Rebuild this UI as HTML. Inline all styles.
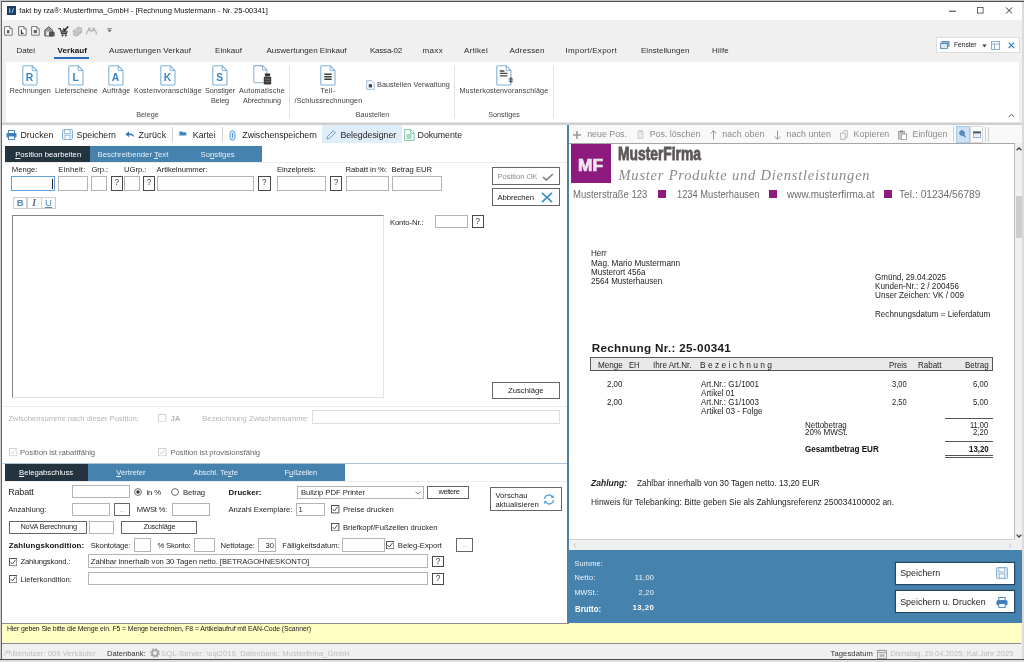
<!DOCTYPE html>
<html><head><meta charset="utf-8">
<style>
*{box-sizing:border-box;margin:0;padding:0}
html,body{width:1024px;height:662px;overflow:hidden;background:#f0f0f0}
body{filter:blur(0.4px);font-family:"Liberation Sans",sans-serif;font-size:7.7px;color:#262626;position:relative}
.a{position:absolute;white-space:nowrap}
.in{position:absolute;background:#fff;border:1.2px solid #b4b4b4}
.q{position:absolute;background:#fff;border:1.2px solid #4a4a4a;font-size:8.2px;text-align:center;color:#3a3a3a}
u{text-decoration-thickness:0.6px;text-underline-offset:1px}
</style></head><body>
<div class="a" style="left:0.00px;top:0.00px;width:1024.00px;height:20.20px;background:#fff"></div>
<svg class="a" style="left:7.00px;top:6.30px" width="9" height="9" viewBox="0 0 9 9"><rect width="9" height="9" fill="#1d3b63"/><path d="M2 7V2.2h1.3V7zM4.2 7l2-5h1.2l-2 5z" fill="#7fb2dd"/></svg>
<div class="a" style="left:19.30px;top:6.00px;line-height:10px;font-size:7.5px;color:#111">fakt by rza®: Musterfirma_GmbH - [Rechnung Mustermann - Nr. 25-00341]</div>
<svg class="a" style="left:946.00px;top:5.00px" width="70" height="12" viewBox="0 0 70 12"><path d="M3 6.2h7" stroke="#333" stroke-width="1"/><rect x="31.5" y="2.5" width="5.6" height="5.6" fill="none" stroke="#444" stroke-width="0.8"/><path d="M60 2.5l6 6M66 2.5l-6 6" stroke="#333" stroke-width="1"/></svg>
<svg class="a" style="left:4.00px;top:26.20px" width="9" height="10" viewBox="0 0 9 10"><path d="M0.6 0.6h5.2l2.4 2.4v6.2H0.6z" fill="#fbfbfb" stroke="#777" stroke-width="1"/><path d="M5.8 0.6v2.4h2.4" fill="none" stroke="#777" stroke-width="0.8"/><rect x="3" y="4.2" width="2.4" height="3" fill="#555"/></svg>
<svg class="a" style="left:17.60px;top:26.20px" width="9" height="10" viewBox="0 0 9 10"><path d="M0.6 0.6h5.2l2.4 2.4v6.2H0.6z" fill="#fbfbfb" stroke="#777" stroke-width="1"/><path d="M5.8 0.6v2.4h2.4" fill="none" stroke="#777" stroke-width="0.8"/><path d="M3.4 3.8v3.6h2.2" fill="none" stroke="#333" stroke-width="1.1"/></svg>
<svg class="a" style="left:31.00px;top:26.20px" width="9" height="10" viewBox="0 0 9 10"><path d="M0.6 0.6h5.2l2.4 2.4v6.2H0.6z" fill="#fbfbfb" stroke="#777" stroke-width="1"/><path d="M5.8 0.6v2.4h2.4" fill="none" stroke="#777" stroke-width="0.8"/><rect x="2.6" y="4" width="3.4" height="3.2" fill="#666"/></svg>
<svg class="a" style="left:44.30px;top:25.60px" width="11" height="11" viewBox="0 0 11 11"><path d="M0.8 10V4.2L4.6 0.8l4 3.4V10z" fill="#9a9a9a" stroke="#555" stroke-width="1"/><path d="M2.3 9.5V5.5h2.6v4z" fill="#eee"/><path d="M5.6 10V6.2h4.6V10z" fill="#555" stroke="#444" stroke-width="0.7"/></svg>
<svg class="a" style="left:58.30px;top:25.60px" width="11" height="11" viewBox="0 0 11 11"><path d="M0.4 2.6h1.8l1.5 5h4.6l1-2.8" fill="none" stroke="#333" stroke-width="1.1"/><path d="M3 4.2h5.2v2.6H3.8z" fill="#555"/><circle cx="4.5" cy="9.4" r="1" fill="#333"/><circle cx="7.8" cy="9.4" r="1" fill="#333"/><path d="M5.2 2.6l1.6 1.6L10.2 0.6" fill="none" stroke="#222" stroke-width="1.5"/></svg>
<svg class="a" style="left:71.80px;top:25.60px" width="11" height="11" viewBox="0 0 11 11"><path d="M0.8 5.2L6.6 1l3.6 1.6L4.4 7z" fill="#c9c9c9" stroke="#b0b0b0" stroke-width="0.8"/><path d="M0.8 6.8L4.4 8.6l5.8-4.4M0.8 8.4l3.6 1.8 5.8-4.4" fill="none" stroke="#b5b5b5" stroke-width="1.1"/></svg>
<svg class="a" style="left:85.80px;top:27.00px" width="11" height="8" viewBox="0 0 11 8"><path d="M0.5 7.5c0-3 1.3-4.2 2.8-4.2s2.2 1.2 2.2 1.2 0.7-1.2 2.2-1.2 2.8 1.2 2.8 4.2" fill="none" stroke="#b5b5b5" stroke-width="1.3"/><circle cx="3.4" cy="1.9" r="1.4" fill="#b5b5b5"/><circle cx="7.6" cy="1.9" r="1.4" fill="#b5b5b5"/></svg>
<svg class="a" style="left:106.80px;top:28.00px" width="5" height="5" viewBox="0 0 5 5"><path d="M0.3 0.6h4.4" stroke="#666" stroke-width="0.8"/><path d="M0.5 1.8h4L2.5 4.4z" fill="#666"/></svg>
<div class="a" style="left:16.50px;top:45.10px;line-height:11px;font-size:8.0px;letter-spacing:-0.035px;color:#2b2b2b">Datei</div>
<div class="a" style="left:57.40px;top:45.10px;line-height:11px;font-size:8.0px;letter-spacing:0.099px;color:#111;font-weight:bold">Verkauf</div>
<div class="a" style="left:109.00px;top:45.10px;line-height:11px;font-size:8.0px;letter-spacing:0.075px;color:#2b2b2b">Auswertungen Verkauf</div>
<div class="a" style="left:215.00px;top:45.10px;line-height:11px;font-size:8.0px;letter-spacing:0.045px;color:#2b2b2b">Einkauf</div>
<div class="a" style="left:266.50px;top:45.10px;line-height:11px;font-size:8.0px;color:#2b2b2b">Auswertungen Einkauf</div>
<div class="a" style="left:370.00px;top:45.10px;line-height:11px;font-size:8.0px;letter-spacing:-0.225px;color:#2b2b2b">Kassa-02</div>
<div class="a" style="left:422.50px;top:45.10px;line-height:11px;font-size:8.0px;letter-spacing:0.347px;color:#2b2b2b">maxx</div>
<div class="a" style="left:464.00px;top:45.10px;line-height:11px;font-size:8.0px;letter-spacing:0.253px;color:#2b2b2b">Artikel</div>
<div class="a" style="left:509.50px;top:45.10px;line-height:11px;font-size:8.0px;letter-spacing:0.150px;color:#2b2b2b">Adressen</div>
<div class="a" style="left:565.50px;top:45.10px;line-height:11px;font-size:8.0px;letter-spacing:0.268px;color:#2b2b2b">Import/Export</div>
<div class="a" style="left:641.00px;top:45.10px;line-height:11px;font-size:8.0px;letter-spacing:0.036px;color:#2b2b2b">Einstellungen</div>
<div class="a" style="left:712.00px;top:45.10px;line-height:11px;font-size:8.0px;letter-spacing:0.199px;color:#2b2b2b">Hilfe</div>
<div class="a" style="left:54.20px;top:56.50px;width:34.60px;height:2.10px;background:#2a6cb8"></div>
<div class="a" style="left:935.50px;top:37.40px;width:84.20px;height:15.30px;background:#fff;border:1px solid #dcdcdc"></div>
<svg class="a" style="left:940.00px;top:41.00px" width="10" height="8" viewBox="0 0 10 8"><rect x="2" y="0.5" width="7" height="5" fill="#8fb4d6" stroke="#4a7fb0" stroke-width="0.8"/><rect x="0.5" y="2.5" width="7" height="5" fill="#dbe8f4" stroke="#4a7fb0" stroke-width="0.8"/></svg>
<div class="a" style="left:954.00px;top:40.20px;line-height:10px;font-size:6.8px;letter-spacing:-0.079px;color:#222">Fenster</div>
<svg class="a" style="left:982.00px;top:43.50px" width="5" height="4" viewBox="0 0 5 4"><path d="M0.3 0.5h4.4L2.5 3.5z" fill="#444"/></svg>
<svg class="a" style="left:991.00px;top:40.50px" width="9" height="9" viewBox="0 0 9 9"><rect x="0.5" y="0.5" width="8" height="8" fill="#fff" stroke="#6fa0cc" stroke-width="0.8"/><path d="M0.5 3h8M3.5 3v5.5" stroke="#6fa0cc" stroke-width="0.8"/></svg>
<svg class="a" style="left:1008.00px;top:42.00px" width="7" height="7" viewBox="0 0 7 7"><path d="M0.7 0.7l5.3 5.3M6 0.7L0.7 6" stroke="#2f7fc4" stroke-width="1.1"/></svg>
<div class="a" style="left:6.00px;top:61.50px;width:1013.00px;height:60.00px;background:#fff"></div>
<div class="a" style="left:2.00px;top:121.50px;width:1020.00px;height:3.00px;background:#cfcfcf"></div>
<div class="a" style="left:2.00px;top:121.50px;width:1020.00px;height:1.00px;background:#e6e6e6"></div>
<svg class="a" style="left:21.80px;top:64.80px" width="17" height="21" viewBox="0 0 17 21"><path d="M2 0.8h8.2l4.8 4.8v13.2a1.2 1.2 0 0 1-1.2 1.2H2a1.2 1.2 0 0 1-1.2-1.2V2A1.2 1.2 0 0 1 2 0.8z" fill="#fff" stroke="#7fb3da" stroke-width="1.1"/><path d="M10.2 0.8v4.8H15" fill="none" stroke="#7fb3da" stroke-width="1"/><text x="7.6" y="16" text-anchor="middle" font-family="Liberation Sans" font-weight="bold" font-size="10.4" fill="#3b86c0">R</text></svg>
<svg class="a" style="left:68.00px;top:64.80px" width="17" height="21" viewBox="0 0 17 21"><path d="M2 0.8h8.2l4.8 4.8v13.2a1.2 1.2 0 0 1-1.2 1.2H2a1.2 1.2 0 0 1-1.2-1.2V2A1.2 1.2 0 0 1 2 0.8z" fill="#fff" stroke="#7fb3da" stroke-width="1.1"/><path d="M10.2 0.8v4.8H15" fill="none" stroke="#7fb3da" stroke-width="1"/><text x="7.6" y="16" text-anchor="middle" font-family="Liberation Sans" font-weight="bold" font-size="10.4" fill="#3b86c0">L</text></svg>
<svg class="a" style="left:108.10px;top:64.80px" width="17" height="21" viewBox="0 0 17 21"><path d="M2 0.8h8.2l4.8 4.8v13.2a1.2 1.2 0 0 1-1.2 1.2H2a1.2 1.2 0 0 1-1.2-1.2V2A1.2 1.2 0 0 1 2 0.8z" fill="#fff" stroke="#7fb3da" stroke-width="1.1"/><path d="M10.2 0.8v4.8H15" fill="none" stroke="#7fb3da" stroke-width="1"/><text x="7.6" y="16" text-anchor="middle" font-family="Liberation Sans" font-weight="bold" font-size="10.4" fill="#3b86c0">A</text></svg>
<svg class="a" style="left:159.50px;top:64.80px" width="17" height="21" viewBox="0 0 17 21"><path d="M2 0.8h8.2l4.8 4.8v13.2a1.2 1.2 0 0 1-1.2 1.2H2a1.2 1.2 0 0 1-1.2-1.2V2A1.2 1.2 0 0 1 2 0.8z" fill="#fff" stroke="#7fb3da" stroke-width="1.1"/><path d="M10.2 0.8v4.8H15" fill="none" stroke="#7fb3da" stroke-width="1"/><text x="7.6" y="16" text-anchor="middle" font-family="Liberation Sans" font-weight="bold" font-size="10.4" fill="#3b86c0">K</text></svg>
<svg class="a" style="left:211.50px;top:64.80px" width="17" height="21" viewBox="0 0 17 21"><path d="M2 0.8h8.2l4.8 4.8v13.2a1.2 1.2 0 0 1-1.2 1.2H2a1.2 1.2 0 0 1-1.2-1.2V2A1.2 1.2 0 0 1 2 0.8z" fill="#fff" stroke="#7fb3da" stroke-width="1.1"/><path d="M10.2 0.8v4.8H15" fill="none" stroke="#7fb3da" stroke-width="1"/><text x="7.6" y="16" text-anchor="middle" font-family="Liberation Sans" font-weight="bold" font-size="10.4" fill="#3b86c0">S</text></svg>
<svg class="a" style="left:253.00px;top:64.80px" width="19" height="21" viewBox="0 0 19 21"><path d="M2 0.6h7.5l4.5 4.5v11.5a1.2 1.2 0 0 1-1.2 1.2H2a1.2 1.2 0 0 1-1.2-1.2V1.8A1.2 1.2 0 0 1 2 0.6z" fill="#fff" stroke="#8fb3d2" stroke-width="1.1"/><path d="M9.5 0.6v4.5H14" fill="none" stroke="#8fb3d2" stroke-width="1"/><rect x="10.8" y="11.4" width="7.4" height="8" rx="1.2" fill="#3a3a3a"/><path d="M11.6 8.6h5.8l-0.6 2.4h-4.6z" fill="#333"/><path d="M11.8 14.2h5.4M11.8 16.6h5.4" stroke="#8a8a8a" stroke-width="0.7"/></svg>
<svg class="a" style="left:319.50px;top:64.80px" width="17" height="21" viewBox="0 0 17 21"><path d="M2 0.8h8.2l4.8 4.8v13.2a1.2 1.2 0 0 1-1.2 1.2H2a1.2 1.2 0 0 1-1.2-1.2V2A1.2 1.2 0 0 1 2 0.8z" fill="#fff" stroke="#7fb3da" stroke-width="1.1"/><path d="M10.2 0.8v4.8H15" fill="none" stroke="#7fb3da" stroke-width="1"/><path d="M4.3 9.3h7.4M4.3 11.8h7.4M4.3 14.3h7.4" stroke="#3a3a3a" stroke-width="1.5"/></svg>
<svg class="a" style="left:495.50px;top:64.80px" width="19" height="21" viewBox="0 0 19 21"><path d="M2 0.8h8.2l4.8 4.8v13.2a1.2 1.2 0 0 1-1.2 1.2H2a1.2 1.2 0 0 1-1.2-1.2V2A1.2 1.2 0 0 1 2 0.8z" fill="#fff" stroke="#7fb3da" stroke-width="1.1"/><path d="M10.2 0.8v4.8H15" fill="none" stroke="#7fb3da" stroke-width="1"/><path d="M3.8 6h4.6M3.8 8.4h7.6M3.8 10.8h7.6" stroke="#444" stroke-width="1.3"/><path d="M12.6 14h4.4M12.6 16.2h4.4M14.8 12v6" stroke="#3a4a5a" stroke-width="1"/></svg>
<div class="a" style="left:9.70px;top:85.60px;line-height:10px;font-size:7.2px;letter-spacing:0.046px;color:#3c3c3c">Rechnungen</div>
<div class="a" style="left:55.00px;top:85.60px;line-height:10px;font-size:7.2px;color:#3c3c3c">Lieferscheine</div>
<div class="a" style="left:102.20px;top:85.60px;line-height:10px;font-size:7.2px;letter-spacing:0.135px;color:#3c3c3c">Aufträge</div>
<div class="a" style="left:134.00px;top:85.60px;line-height:10px;font-size:7.2px;letter-spacing:0.153px;color:#3c3c3c">Kostenvoranschläge</div>
<div class="a" style="left:205.00px;top:85.60px;line-height:10px;font-size:7.2px;letter-spacing:-0.046px;color:#3c3c3c">Sonstiger</div>
<div class="a" style="left:211.00px;top:96.00px;line-height:10px;font-size:7.2px;letter-spacing:-0.083px;color:#3c3c3c">Beleg</div>
<div class="a" style="left:239.00px;top:85.60px;line-height:10px;font-size:7.2px;letter-spacing:0.198px;color:#3c3c3c">Automatische</div>
<div class="a" style="left:243.00px;top:96.00px;line-height:10px;font-size:7.2px;letter-spacing:-0.083px;color:#3c3c3c">Abrechnung</div>
<div class="a" style="left:320.50px;top:85.60px;line-height:10px;font-size:7.2px;letter-spacing:0.360px;color:#3c3c3c">Teil-</div>
<div class="a" style="left:294.50px;top:96.00px;line-height:10px;font-size:7.2px;letter-spacing:0.153px;color:#3c3c3c">/Schlussrechnungen</div>
<div class="a" style="left:459.50px;top:85.60px;line-height:10px;font-size:7.2px;letter-spacing:0.123px;color:#3c3c3c">Musterkostenvoranschläge</div>
<svg class="a" style="left:366.00px;top:79.60px" width="9" height="10" viewBox="0 0 9 10"><path d="M0.6 0.6h5.2l2.6 2.6v6.2H0.6z" fill="#f4f8fc" stroke="#9bbfdc" stroke-width="0.9"/><rect x="2.8" y="4.2" width="3.2" height="3.2" fill="#444"/></svg>
<div class="a" style="left:377.00px;top:79.60px;line-height:10px;font-size:7.2px;letter-spacing:0.083px;color:#3c3c3c">Baustellen Verwaltung</div>
<div class="a" style="left:136.29px;top:109.70px;line-height:10px;font-size:7.2px;color:#444">Belege</div>
<div class="a" style="left:355.69px;top:109.70px;line-height:10px;font-size:7.2px;color:#444">Baustellen</div>
<div class="a" style="left:488.19px;top:109.70px;line-height:10px;font-size:7.2px;color:#444">Sonstiges</div>
<div class="a" style="left:289.30px;top:66.00px;width:1.00px;height:52.00px;background:#e2e2e2"></div>
<div class="a" style="left:454.00px;top:66.00px;width:1.00px;height:52.00px;background:#e2e2e2"></div>
<div class="a" style="left:553.00px;top:66.00px;width:1.00px;height:52.00px;background:#e2e2e2"></div>
<svg class="a" style="left:1007.50px;top:112.50px" width="7" height="5" viewBox="0 0 7 5"><path d="M0.8 4l2.7-2.7L6.2 4" fill="none" stroke="#555" stroke-width="1"/></svg>
<div class="a" style="left:2.00px;top:124.50px;width:565.50px;height:498.30px;background:#fff"></div>
<div class="a" style="left:322.00px;top:124.60px;width:79.80px;height:18.80px;background:#e0eefa"></div>
<svg class="a" style="left:6.00px;top:129.50px" width="11" height="10" viewBox="0 0 11 10"><rect x="2.5" y="0.5" width="6" height="3" fill="#fff" stroke="#3d7fb8" stroke-width="0.9"/><rect x="0.5" y="3" width="10" height="4.5" rx="1" fill="#3d7fb8"/><rect x="2.5" y="6" width="6" height="3.5" fill="#fff" stroke="#3d7fb8" stroke-width="0.9"/></svg>
<div class="a" style="left:20.40px;top:128.60px;line-height:12px;font-size:8.8px;letter-spacing:0.047px;color:#1e1e1e">Drucken</div>
<svg class="a" style="left:62.00px;top:129.30px" width="11" height="11" viewBox="0 0 11 11"><rect x="0.5" y="0.5" width="10" height="10" rx="1" fill="#e6f0f8" stroke="#7fabd0" stroke-width="0.9"/><rect x="2.5" y="0.8" width="5.5" height="3.6" fill="#fff" stroke="#7fabd0" stroke-width="0.7"/><rect x="3" y="6.3" width="5" height="4" fill="#fff" stroke="#7fabd0" stroke-width="0.7"/></svg>
<div class="a" style="left:76.60px;top:128.60px;line-height:12px;font-size:8.8px;letter-spacing:-0.025px;color:#1e1e1e">Speichern</div>
<svg class="a" style="left:124.50px;top:131.00px" width="10" height="7" viewBox="0 0 10 7"><path d="M0.3 3.2L4 0.3v1.9c3 0 5 1.3 5.6 4.2C8 4.7 6.5 4.3 4 4.3v1.9z" fill="#3d7fb8"/></svg>
<div class="a" style="left:138.40px;top:128.60px;line-height:12px;font-size:8.8px;letter-spacing:0.151px;color:#1e1e1e">Zurück</div>
<div class="a" style="left:172.00px;top:127.00px;width:1.00px;height:15.00px;background:#d0d0d0"></div>
<svg class="a" style="left:179.00px;top:131.40px" width="8" height="5" viewBox="0 0 8 5"><path d="M0.3 0.4h2.6l0.8 0.8h3.6v3.4H0.3z" fill="#3a86c8"/></svg>
<div class="a" style="left:192.80px;top:128.60px;line-height:12px;font-size:8.8px;letter-spacing:-0.015px;color:#1e1e1e">Kartei</div>
<div class="a" style="left:221.50px;top:127.00px;width:1.00px;height:15.00px;background:#d0d0d0"></div>
<svg class="a" style="left:229.00px;top:129.50px" width="7" height="11" viewBox="0 0 7 11"><rect x="1" y="0.8" width="5" height="9.4" rx="2.5" fill="#dcebf7" stroke="#5a9ad0" stroke-width="1"/><path d="M3.5 3v5" stroke="#5a9ad0" stroke-width="1"/></svg>
<div class="a" style="left:242.30px;top:128.60px;line-height:12px;font-size:8.8px;letter-spacing:-0.037px;color:#1e1e1e">Zwischenspeichern</div>
<svg class="a" style="left:326.00px;top:129.50px" width="10" height="10" viewBox="0 0 10 10"><path d="M1 9l0.7-2.6L7.3 0.8l1.9 1.9L3.6 8.3z" fill="#eaf2fa" stroke="#5b8fc0" stroke-width="0.9"/></svg>
<div class="a" style="left:340.40px;top:128.60px;line-height:12px;font-size:8.8px;letter-spacing:-0.036px;color:#1e1e1e">Belegdesigner</div>
<svg class="a" style="left:403.80px;top:128.50px" width="11" height="12" viewBox="0 0 11 12"><path d="M0.6 0.6h6l3.6 3.6v7.2H0.6z" fill="#fff" stroke="#6fc198" stroke-width="0.9"/><rect x="2.5" y="5" width="5" height="5" fill="#a4dabf"/><path d="M6.6 0.6v3.6h3.6" fill="none" stroke="#6fc198" stroke-width="0.8"/></svg>
<div class="a" style="left:417.60px;top:128.60px;line-height:12px;font-size:8.8px;letter-spacing:-0.067px;color:#1e1e1e">Dokumente</div>
<div class="a" style="left:5.00px;top:145.50px;width:256.60px;height:16.10px;background:#4682ae"></div>
<div class="a" style="left:5.00px;top:145.50px;width:84.80px;height:16.10px;background:#24343f"></div>
<div class="a" style="left:15.20px;top:148.50px;line-height:11px;font-size:7.7px;letter-spacing:0.009px;color:#fff"><u>P</u>osition bearbeiten</div>
<div class="a" style="left:97.50px;top:148.50px;line-height:11px;font-size:7.7px;letter-spacing:0.050px;color:#e8f1f8">Beschreibender <u>T</u>ext</div>
<div class="a" style="left:200.60px;top:148.50px;line-height:11px;font-size:7.7px;letter-spacing:0.020px;color:#e8f1f8">So<u>n</u>stiges</div>
<div class="a" style="left:3.00px;top:162.20px;width:564.00px;height:0.80px;background:#ececec"></div>
<div class="a" style="left:11.80px;top:164.10px;line-height:11px;font-size:7.7px;letter-spacing:-0.014px;color:#222">Menge:</div>
<div class="a" style="left:58.30px;top:164.10px;line-height:11px;font-size:7.7px;letter-spacing:0.190px;color:#222">Einheit:</div>
<div class="a" style="left:91.50px;top:164.10px;line-height:11px;font-size:7.7px;letter-spacing:-0.123px;color:#222">Grp.:</div>
<div class="a" style="left:124.00px;top:164.10px;line-height:11px;font-size:7.7px;letter-spacing:-0.029px;color:#222">UGrp.:</div>
<div class="a" style="left:156.60px;top:164.10px;line-height:11px;font-size:7.7px;letter-spacing:-0.062px;color:#222">Artikelnummer:</div>
<div class="a" style="left:277.00px;top:164.10px;line-height:11px;font-size:7.7px;letter-spacing:-0.109px;color:#222">Einzelpreis:</div>
<div class="a" style="left:345.60px;top:164.10px;line-height:11px;font-size:7.7px;letter-spacing:-0.045px;color:#222">Rabatt in %:</div>
<div class="a" style="left:391.50px;top:164.10px;line-height:11px;font-size:7.7px;letter-spacing:-0.058px;color:#222">Betrag EUR</div>
<div class="a" style="left:11.00px;top:176.10px;width:44.00px;height:14.50px;background:#fff;border:1.3px solid #62a0dc"></div>
<div class="a" style="left:52.00px;top:178.50px;width:1.00px;height:10.50px;background:#222"></div>
<div class="in" style="left:58.00px;top:176.10px;width:30.00px;height:14.50px"></div>
<div class="in" style="left:91.00px;top:176.10px;width:16.00px;height:14.50px"></div>
<div class="q" style="left:110.50px;top:176.10px;width:12.50px;height:14.50px;line-height:12.5px">?</div>
<div class="in" style="left:124.00px;top:176.10px;width:15.50px;height:14.50px"></div>
<div class="q" style="left:143.00px;top:176.10px;width:12.30px;height:14.50px;line-height:12.5px">?</div>
<div class="in" style="left:156.60px;top:176.10px;width:97.90px;height:14.50px"></div>
<div class="q" style="left:258.00px;top:176.10px;width:12.70px;height:14.50px;line-height:12.5px">?</div>
<div class="in" style="left:277.00px;top:176.10px;width:49.40px;height:14.50px"></div>
<div class="q" style="left:330.00px;top:176.10px;width:12.20px;height:14.50px;line-height:12.5px">?</div>
<div class="in" style="left:345.60px;top:176.10px;width:43.20px;height:14.50px"></div>
<div class="in" style="left:391.50px;top:176.10px;width:50.30px;height:14.50px"></div>
<div class="a" style="left:13.20px;top:197.00px;width:14.00px;height:12.00px;background:#fdfdfd;border:1px solid #cdcdcd;text-align:center;line-height:10.5px;font-size:9.6px;font-weight:bold;color:#5b8ab3">B</div>
<div class="a" style="left:26.60px;top:197.00px;width:15.00px;height:12.00px;background:#fdfdfd;border:1px solid #cdcdcd;text-align:center;line-height:10.5px;font-size:9.6px;font-style:italic;font-weight:bold;color:#566a80;font-family:'Liberation Serif'">I</div>
<div class="a" style="left:41.00px;top:197.00px;width:14.80px;height:12.00px;background:#fdfdfd;border:1px solid #cdcdcd;text-align:center;line-height:10.5px;font-size:9.6px;color:#4f86b8;text-decoration:underline;text-underline-offset:0.5px">U</div>
<div class="a" style="left:12.30px;top:215.20px;width:371.70px;height:182.40px;background:#fff;border:1px solid #e3e3e3;border-top:1.3px solid #868686;border-left:1.3px solid #868686"></div>
<div class="a" style="left:389.90px;top:216.50px;line-height:11px;font-size:7.7px;letter-spacing:-0.097px">Konto-Nr.:</div>
<div class="in" style="left:435.30px;top:215.20px;width:32.70px;height:13.20px"></div>
<div class="q" style="left:472.00px;top:215.20px;width:11.80px;height:13.20px;line-height:11.2px">?</div>
<div class="a" style="left:492.00px;top:167.40px;width:68.20px;height:17.50px;background:#fff;border:1.2px solid #666"></div>
<div class="a" style="left:497.50px;top:170.90px;line-height:11px;font-size:7.7px;letter-spacing:-0.060px;color:#8c8c8c">Position OK</div>
<svg class="a" style="left:541.50px;top:172.50px" width="12" height="8" viewBox="0 0 12 8"><path d="M1 4l3.2 3L11 1" fill="none" stroke="#7c7c7c" stroke-width="1.6"/></svg>
<div class="a" style="left:492.00px;top:188.40px;width:68.20px;height:17.50px;background:#fff;border:1.2px solid #666"></div>
<div class="a" style="left:497.50px;top:192.10px;line-height:11px;font-size:7.7px;letter-spacing:-0.083px;color:#222">Abbrechen</div>
<svg class="a" style="left:541.00px;top:192.30px" width="12" height="11" viewBox="0 0 12 11"><path d="M1 0.8l10 9.4M11 0.8L1 10.2" fill="none" stroke="#3d8dc8" stroke-width="1.7"/></svg>
<div class="a" style="left:491.50px;top:381.80px;width:68.70px;height:17.10px;background:#fff;border:1.2px solid #666"></div>
<div class="a" style="left:508.00px;top:385.10px;line-height:11px;font-size:7.7px;color:#222">Zuschläge</div>
<div class="a" style="left:3.00px;top:406.00px;width:564.00px;height:1.00px;background:#ececec"></div>
<div class="a" style="left:8.20px;top:412.50px;line-height:11px;font-size:7.7px;letter-spacing:-0.011px;color:#b5b5b5">Zwischensumme nach dieser Position:</div>
<svg class="a" style="left:158.20px;top:413.80px" width="8.4" height="8.4" viewBox="0 0 8.4 8.4"><rect x="0.5" y="0.5" width="7.4" height="7.4" fill="#fff" stroke="#d0d0d0" stroke-width="1"/></svg>
<div class="a" style="left:170.50px;top:412.50px;line-height:11px;font-size:7.7px;color:#b5b5b5;font-weight:bold">JA</div>
<div class="a" style="left:202.20px;top:412.50px;line-height:11px;font-size:7.7px;letter-spacing:0.020px;color:#b5b5b5">Bezeichnung Zwischensumme:</div>
<div class="a" style="left:312.20px;top:410.40px;width:247.60px;height:14.10px;background:#fff;border:1px solid #dedede"></div>
<svg class="a" style="left:8.80px;top:448.10px" width="8.4" height="8.4" viewBox="0 0 8.4 8.4"><rect x="0.5" y="0.5" width="7.4" height="7.4" fill="#fff" stroke="#cfcfcf" stroke-width="1"/><path d="M1.6 4 L3.4 6 L6.6 1.8" fill="none" stroke="#cfcfcf" stroke-width="1"/></svg>
<div class="a" style="left:20.00px;top:446.80px;line-height:11px;font-size:7.7px;letter-spacing:-0.023px;color:#666">Position ist rabattfähig</div>
<svg class="a" style="left:158.20px;top:448.10px" width="8.4" height="8.4" viewBox="0 0 8.4 8.4"><rect x="0.5" y="0.5" width="7.4" height="7.4" fill="#fff" stroke="#cfcfcf" stroke-width="1"/><path d="M1.6 4 L3.4 6 L6.6 1.8" fill="none" stroke="#cfcfcf" stroke-width="1"/></svg>
<div class="a" style="left:170.50px;top:446.80px;line-height:11px;font-size:7.7px;letter-spacing:-0.037px;color:#666">Position ist provisionsfähig</div>
<div class="a" style="left:3.00px;top:462.80px;width:564.00px;height:1.20px;background:#a9c4dc"></div>
<div class="a" style="left:5.00px;top:464.00px;width:339.50px;height:16.60px;background:#4682ae"></div>
<div class="a" style="left:5.00px;top:464.00px;width:83.00px;height:16.60px;background:#24343f"></div>
<div class="a" style="left:19.00px;top:467.30px;line-height:11px;font-size:7.7px;letter-spacing:0.019px;color:#fff"><u>B</u>elegabschluss</div>
<div class="a" style="left:116.30px;top:467.30px;line-height:11px;font-size:7.7px;letter-spacing:-0.026px;color:#e8f1f8"><u>V</u>ertreter</div>
<div class="a" style="left:193.40px;top:467.30px;line-height:11px;font-size:7.7px;letter-spacing:-0.089px;color:#e8f1f8">Abschl. Te<u>x</u>te</div>
<div class="a" style="left:284.40px;top:467.30px;line-height:11px;font-size:7.7px;letter-spacing:-0.112px;color:#e8f1f8">F<u>u</u>ßzeilen</div>
<div class="a" style="left:8.20px;top:485.50px;line-height:13px;font-size:9px;letter-spacing:-0.169px">Rabatt</div>
<div class="in" style="left:71.80px;top:485.20px;width:58.60px;height:13.20px"></div>
<svg class="a" style="left:134.30px;top:488.00px" width="8" height="8" viewBox="0 0 8 8"><circle cx="4" cy="4" r="3.4" fill="#fff" stroke="#6a6a6a" stroke-width="1"/><circle cx="4" cy="4" r="1.8" fill="#3a3a3a"/></svg>
<div class="a" style="left:146.50px;top:486.70px;line-height:11px;font-size:7.7px;letter-spacing:-0.120px">in %</div>
<svg class="a" style="left:171.00px;top:488.00px" width="8" height="8" viewBox="0 0 8 8"><circle cx="4" cy="4" r="3.4" fill="#fff" stroke="#6a6a6a" stroke-width="1"/></svg>
<div class="a" style="left:183.00px;top:486.70px;line-height:11px;font-size:7.7px;letter-spacing:-0.115px">Betrag</div>
<div class="a" style="left:228.50px;top:486.50px;line-height:11px;font-size:7.9px;letter-spacing:0.076px;color:#111;font-weight:bold">Drucker:</div>
<div class="in" style="left:297.00px;top:486.00px;width:126.60px;height:12.80px"></div>
<div class="a" style="left:301.00px;top:486.90px;line-height:11px;font-size:7.7px;letter-spacing:-0.055px">Bullzip PDF Printer</div>
<svg class="a" style="left:414.50px;top:490.50px" width="6" height="4" viewBox="0 0 6 4"><path d="M0.5 0.6l2.5 2.5 2.5-2.5" fill="none" stroke="#555" stroke-width="0.8"/></svg>
<div class="a" style="left:427.00px;top:486.00px;width:42.00px;height:12.50px;background:#fff;border:1.2px solid #666"></div>
<div class="a" style="left:438.50px;top:487.20px;line-height:10px;font-size:7.4px;letter-spacing:-0.408px">weitere</div>
<div class="a" style="left:490.20px;top:487.10px;width:71.80px;height:24.30px;background:#fff;border:1.2px solid #666"></div>
<div class="a" style="left:495.40px;top:490.00px;line-height:11px;font-size:7.7px">Vorschau</div>
<div class="a" style="left:495.40px;top:499.10px;line-height:11px;font-size:7.7px;letter-spacing:0.028px">aktualisieren</div>
<svg class="a" style="left:543.20px;top:493.80px" width="12" height="11" viewBox="0 0 12 11"><path d="M1.4 4.8A4.5 4.5 0 0 1 9.4 2.8" fill="none" stroke="#5aa3d6" stroke-width="1.3"/><path d="M10.6 6.2A4.5 4.5 0 0 1 2.6 8.2" fill="none" stroke="#5aa3d6" stroke-width="1.3"/><path d="M10.9 0.8v3.3H7.6z" fill="#5aa3d6"/><path d="M1.1 10.2V6.9h3.3z" fill="#5aa3d6"/></svg>
<div class="a" style="left:3.00px;top:481.20px;width:564.00px;height:0.80px;background:#ededed"></div>
<div class="a" style="left:8.20px;top:504.10px;line-height:11px;font-size:7.7px;letter-spacing:-0.043px">Anzahlung:</div>
<div class="in" style="left:71.80px;top:503.00px;width:38.10px;height:13.30px"></div>
<div class="a" style="left:113.70px;top:503.00px;width:16.70px;height:13.30px;background:#fff;border:1.2px solid #666;text-align:center;line-height:13px;font-size:6px;color:#777">...</div>
<div class="a" style="left:136.80px;top:504.10px;line-height:11px;font-size:7.7px;letter-spacing:-0.269px">MWSt %:</div>
<div class="in" style="left:172.00px;top:503.00px;width:37.50px;height:13.30px"></div>
<div class="a" style="left:228.50px;top:504.10px;line-height:11px;font-size:7.7px;letter-spacing:-0.043px">Anzahl Exemplare:</div>
<div class="in" style="left:296.00px;top:503.00px;width:28.50px;height:13.30px"></div>
<div class="a" style="left:298.50px;top:504.10px;line-height:11px;font-size:7.7px">1</div>
<svg class="a" style="left:331.30px;top:505.40px" width="8.4" height="8.4" viewBox="0 0 8.4 8.4"><rect x="0.5" y="0.5" width="7.4" height="7.4" fill="#fff" stroke="#555" stroke-width="1"/><path d="M1.6 4 L3.4 6 L6.6 1.8" fill="none" stroke="#555" stroke-width="1"/></svg>
<div class="a" style="left:343.00px;top:504.10px;line-height:11px;font-size:7.7px;letter-spacing:-0.047px">Preise drucken</div>
<div class="a" style="left:8.80px;top:520.70px;width:77.80px;height:13.30px;background:#fff;border:1.2px solid #666"></div>
<div class="a" style="left:20.50px;top:522.20px;line-height:10px;font-size:7.4px;letter-spacing:-0.269px">NoVA Berechnung</div>
<div class="in" style="left:89.40px;top:520.70px;width:24.30px;height:13.30px"></div>
<div class="a" style="left:121.00px;top:520.70px;width:76.00px;height:13.30px;background:#fff;border:1.2px solid #666"></div>
<div class="a" style="left:143.50px;top:522.20px;line-height:10px;font-size:7.4px;letter-spacing:-0.260px">Zuschläge</div>
<svg class="a" style="left:331.30px;top:522.80px" width="8.4" height="8.4" viewBox="0 0 8.4 8.4"><rect x="0.5" y="0.5" width="7.4" height="7.4" fill="#fff" stroke="#555" stroke-width="1"/><path d="M1.6 4 L3.4 6 L6.6 1.8" fill="none" stroke="#555" stroke-width="1"/></svg>
<div class="a" style="left:343.00px;top:521.50px;line-height:11px;font-size:7.7px;letter-spacing:-0.047px">Briefkopf/Fußzeilen drucken</div>
<div class="a" style="left:8.80px;top:539.80px;line-height:11px;font-size:7.9px;letter-spacing:0.129px;color:#111;font-weight:bold">Zahlungskondition:</div>
<div class="a" style="left:90.80px;top:539.80px;line-height:11px;font-size:7.7px;letter-spacing:-0.136px">Skontotage:</div>
<div class="in" style="left:133.90px;top:538.00px;width:17.60px;height:13.60px"></div>
<div class="a" style="left:157.60px;top:539.80px;line-height:11px;font-size:7.7px;letter-spacing:-0.255px">% Skonto:</div>
<div class="in" style="left:194.00px;top:538.00px;width:20.80px;height:13.60px"></div>
<div class="a" style="left:220.60px;top:539.80px;line-height:11px;font-size:7.7px;letter-spacing:-0.123px">Nettotage:</div>
<div class="in" style="left:258.40px;top:538.00px;width:17.60px;height:13.60px"></div>
<div class="a" style="left:265.50px;top:539.80px;line-height:11px;font-size:7.7px;letter-spacing:-0.033px">30</div>
<div class="a" style="left:282.20px;top:539.80px;line-height:11px;font-size:7.7px">Fälligkeitsdatum:</div>
<div class="in" style="left:342.40px;top:538.00px;width:42.20px;height:13.60px"></div>
<svg class="a" style="left:386.00px;top:541.10px" width="8.4" height="8.4" viewBox="0 0 8.4 8.4"><rect x="0.5" y="0.5" width="7.4" height="7.4" fill="#fff" stroke="#555" stroke-width="1"/><path d="M1.6 4 L3.4 6 L6.6 1.8" fill="none" stroke="#555" stroke-width="1"/></svg>
<div class="a" style="left:397.80px;top:539.80px;line-height:11px;font-size:7.7px;letter-spacing:-0.026px">Beleg-Export</div>
<div class="a" style="left:456.40px;top:538.00px;width:17.00px;height:14.00px;background:#fff;border:1.2px solid #666;text-align:center;line-height:13px;font-size:6px;color:#777">...</div>
<svg class="a" style="left:8.80px;top:557.50px" width="8.4" height="8.4" viewBox="0 0 8.4 8.4"><rect x="0.5" y="0.5" width="7.4" height="7.4" fill="#fff" stroke="#555" stroke-width="1"/><path d="M1.6 4 L3.4 6 L6.6 1.8" fill="none" stroke="#555" stroke-width="1"/></svg>
<div class="a" style="left:20.50px;top:556.20px;line-height:11px;font-size:7.7px;letter-spacing:-0.204px">Zahlungskond.:</div>
<div class="in" style="left:87.90px;top:554.40px;width:340.10px;height:13.30px"></div>
<div class="a" style="left:90.80px;top:555.80px;line-height:11px;font-size:7.7px;letter-spacing:-0.064px">Zahlbar innerhalb von 30 Tagen netto. [BETRAGOHNESKONTO]</div>
<div class="q" style="left:431.80px;top:555.60px;width:12.40px;height:11.80px;line-height:9.8px">?</div>
<svg class="a" style="left:8.80px;top:575.10px" width="8.4" height="8.4" viewBox="0 0 8.4 8.4"><rect x="0.5" y="0.5" width="7.4" height="7.4" fill="#fff" stroke="#555" stroke-width="1"/><path d="M1.6 4 L3.4 6 L6.6 1.8" fill="none" stroke="#555" stroke-width="1"/></svg>
<div class="a" style="left:20.50px;top:573.80px;line-height:11px;font-size:7.7px;letter-spacing:-0.058px">Lieferkondition:</div>
<div class="in" style="left:87.90px;top:571.70px;width:340.10px;height:13.50px"></div>
<div class="q" style="left:431.80px;top:573.20px;width:12.40px;height:11.80px;line-height:9.8px">?</div>
<div class="a" style="left:567.30px;top:124.50px;width:2.20px;height:498.30px;background:#4f80a8"></div>
<div class="a" style="left:569.40px;top:124.50px;width:452.60px;height:18.50px;background:#f9f9f9"></div>
<svg class="a" style="left:573.00px;top:130.50px" width="8" height="8" viewBox="0 0 8 8"><path d="M4 0v8M0 4h8" stroke="#9a9a9a" stroke-width="1.6"/></svg>
<div class="a" style="left:587.20px;top:128.20px;line-height:12px;font-size:8.9px;letter-spacing:-0.031px;color:#8a8a8a">neue Pos.</div>
<svg class="a" style="left:636.50px;top:129.80px" width="7" height="9" viewBox="0 0 7 9"><path d="M0.5 1.6h6M2.2 1.4V0.5h2.6v0.9M1.2 2v6.4h4.6V2" fill="#ececec" stroke="#c4c4c4" stroke-width="0.8"/></svg>
<div class="a" style="left:649.70px;top:128.20px;line-height:12px;font-size:8.9px;letter-spacing:-0.013px;color:#8a8a8a">Pos. löschen</div>
<svg class="a" style="left:709.50px;top:129.80px" width="7" height="10" viewBox="0 0 7 10"><path d="M3.5 9.5V0.8M0.6 3.6l2.9-2.9 2.9 2.9" fill="none" stroke="#999" stroke-width="1"/></svg>
<div class="a" style="left:722.20px;top:128.20px;line-height:12px;font-size:8.9px;letter-spacing:0.114px;color:#8a8a8a">nach oben</div>
<svg class="a" style="left:774.00px;top:129.80px" width="7" height="10" viewBox="0 0 7 10"><path d="M3.5 0.5v8.7M0.6 6.4l2.9 2.9 2.9-2.9" fill="none" stroke="#999" stroke-width="1"/></svg>
<div class="a" style="left:786.60px;top:128.20px;line-height:12px;font-size:8.9px;letter-spacing:0.036px;color:#8a8a8a">nach unten</div>
<svg class="a" style="left:840.00px;top:129.80px" width="8" height="10" viewBox="0 0 8 10"><path d="M2.5 2.5l2-2h2.8v6.8H5.2M0.6 3.2h4.6v6.2H0.6z" fill="#f8f8f8" stroke="#aaa" stroke-width="0.8"/></svg>
<div class="a" style="left:853.60px;top:128.20px;line-height:12px;font-size:8.9px;letter-spacing:0.022px;color:#8a8a8a">Kopieren</div>
<svg class="a" style="left:898.00px;top:129.50px" width="9" height="10" viewBox="0 0 9 10"><rect x="0.5" y="1.5" width="6" height="7.5" fill="#ccc" stroke="#999" stroke-width="0.8"/><rect x="2" y="0.4" width="3" height="2" fill="#888"/><rect x="3.6" y="4" width="5" height="5.6" fill="#fff" stroke="#999" stroke-width="0.8"/></svg>
<div class="a" style="left:912.50px;top:128.20px;line-height:12px;font-size:8.9px;letter-spacing:-0.030px;color:#8a8a8a">Einfügen</div>
<div class="a" style="left:952.80px;top:127.00px;width:1.00px;height:15.00px;background:#cfcfcf"></div>
<div class="a" style="left:955.80px;top:125.80px;width:13.80px;height:17.00px;background:#cbe1f5;border:1px solid #a8cbea"></div>
<svg class="a" style="left:959.30px;top:130.40px" width="7" height="8" viewBox="0 0 7 8"><circle cx="3" cy="3" r="2.3" fill="#5d8fbf" stroke="#3f73a8" stroke-width="0.9"/><path d="M4.6 4.8l1.8 2.4" stroke="#3f73a8" stroke-width="1.2"/></svg>
<div class="a" style="left:969.60px;top:125.80px;width:13.80px;height:17.00px;background:#fdfdfd;border:1px solid #d9d9d9"></div>
<svg class="a" style="left:972.60px;top:131.40px" width="8" height="7" viewBox="0 0 8 7"><rect x="0.5" y="0.5" width="7" height="6" fill="#fff" stroke="#8aa6c0" stroke-width="0.9"/><path d="M0.5 1.6h7" stroke="#445" stroke-width="1.6"/><path d="M3 2.5v4M5.2 2.5v4" stroke="#b8c8d8" stroke-width="0.6"/></svg>
<div class="a" style="left:985.30px;top:127.00px;width:1.00px;height:15.00px;background:#cfcfcf"></div>
<div class="a" style="left:988.30px;top:127.00px;width:1.00px;height:15.00px;background:#cfcfcf"></div>
<div class="a" style="left:569.40px;top:142.70px;width:445.80px;height:397.70px;background:#fff;border:1px solid #a6a6a6;border-left:none;border-bottom-color:#cfcfcf;border-right-color:#bdbdbd"></div>
<div class="a" style="left:1015.20px;top:143.00px;width:7.10px;height:397.40px;background:#f0f0f0"></div>
<div class="a" style="left:1015.80px;top:195.50px;width:6.50px;height:42.10px;background:#cdcdcd"></div>
<svg class="a" style="left:1016.20px;top:146.80px" width="6" height="4" viewBox="0 0 6 4"><path d="M0.6 3.3l2.4-2.4 2.4 2.4" fill="none" stroke="#444" stroke-width="1.3"/></svg>
<svg class="a" style="left:1016.20px;top:533.50px" width="6" height="4" viewBox="0 0 6 4"><path d="M0.6 0.6l2.4 2.4 2.4-2.4" fill="none" stroke="#444" stroke-width="1.3"/></svg>
<div class="a" style="left:569.40px;top:540.40px;width:452.90px;height:9.60px;background:#f0f0f0"></div>
<svg class="a" style="left:572.50px;top:542.80px" width="4" height="5" viewBox="0 0 4 5"><path d="M3 0.5L0.8 2.5 3 4.5" fill="none" stroke="#c0c0c0" stroke-width="0.9"/></svg>
<svg class="a" style="left:1007.50px;top:542.80px" width="4" height="5" viewBox="0 0 4 5"><path d="M1 0.5l2.2 2L1 4.5" fill="none" stroke="#c0c0c0" stroke-width="0.9"/></svg>
<div class="a" style="left:570.60px;top:144.00px;width:40.00px;height:39.20px;background:#8d1b7e"></div>
<div class="a" style="left:578.20px;top:153.70px;line-height:23px;font-size:16.2px;color:#f1e6ef;font-weight:bold;-webkit-text-stroke:0.7px #f1e6ef;transform-origin:0 50%;transform:scaleX(1.0688)">MF</div>
<div class="a" style="left:618.00px;top:142.00px;line-height:25px;font-size:17.6px;color:#5b5659;font-weight:bold;-webkit-text-stroke:0.8px #5b5659;transform-origin:0 50%;transform:scaleX(0.7858)">MusterFirma</div>
<div class="a" style="left:618.50px;top:165.20px;line-height:20px;font-size:14.5px;letter-spacing:0.781px;color:#8a8a8a;font-style:italic;font-family:'Liberation Serif',serif">Muster Produkte und Dienstleistungen</div>
<div class="a" style="left:572.70px;top:186.70px;line-height:15px;font-size:11px;color:#6d6d6d;transform-origin:0 50%;transform:scaleX(0.8619)">Musterstraße 123</div>
<div class="a" style="left:677.00px;top:186.70px;line-height:15px;font-size:11px;color:#6d6d6d;transform-origin:0 50%;transform:scaleX(0.8474)">1234 Musterhausen</div>
<div class="a" style="left:786.60px;top:186.70px;line-height:15px;font-size:11px;color:#6d6d6d;transform-origin:0 50%;transform:scaleX(0.9050)">www.musterfirma.at</div>
<div class="a" style="left:899.00px;top:186.70px;line-height:15px;font-size:11px;color:#6d6d6d;transform-origin:0 50%;transform:scaleX(0.9318)">Tel.: 01234/56789</div>
<div class="a" style="left:658.20px;top:190.00px;width:8.00px;height:8.40px;background:#8d1b7e"></div>
<div class="a" style="left:768.80px;top:190.00px;width:8.00px;height:8.40px;background:#8d1b7e"></div>
<div class="a" style="left:884.00px;top:190.00px;width:8.00px;height:8.40px;background:#8d1b7e"></div>
<div class="a" style="left:590.80px;top:247.00px;line-height:12px;font-size:8.8px;color:#232323;transform-origin:0 50%;transform:scaleX(0.9205)">Herr</div>
<div class="a" style="left:590.80px;top:256.50px;line-height:12px;font-size:8.8px;color:#232323;transform-origin:0 50%;transform:scaleX(0.9353)">Mag. Mario Mustermann</div>
<div class="a" style="left:590.80px;top:265.70px;line-height:12px;font-size:8.8px;color:#232323;transform-origin:0 50%;transform:scaleX(0.9205)">Musterort 456a</div>
<div class="a" style="left:590.80px;top:275.10px;line-height:12px;font-size:8.8px;color:#232323;transform-origin:0 50%;transform:scaleX(0.9153)">2564 Musterhausen</div>
<div class="a" style="left:875.00px;top:271.00px;line-height:12px;font-size:8.8px;color:#232323;transform-origin:0 50%;transform:scaleX(0.9127)">Gmünd, 29.04.2025</div>
<div class="a" style="left:875.00px;top:280.10px;line-height:12px;font-size:8.8px;color:#232323;transform-origin:0 50%;transform:scaleX(0.9231)">Kunden-Nr.: 2 / 200456</div>
<div class="a" style="left:875.00px;top:289.10px;line-height:12px;font-size:8.8px;color:#232323;transform-origin:0 50%;transform:scaleX(0.9283)">Unser Zeichen: VK / 009</div>
<div class="a" style="left:875.00px;top:308.20px;line-height:12px;font-size:8.8px;color:#232323;transform-origin:0 50%;transform:scaleX(0.9197)">Rechnungsdatum = Lieferdatum</div>
<div class="a" style="left:591.70px;top:340.20px;line-height:16px;font-size:11.7px;letter-spacing:0.316px;color:#1c1c1c;font-weight:bold">Rechnung Nr.: 25-00341</div>
<div class="a" style="left:589.50px;top:357.20px;width:403.40px;height:13.40px;background:#e9e9e9;border:1.2px solid #5a5a5a;border-right:1.6px solid #555;border-bottom:1.6px solid #555"></div>
<div class="a" style="left:597.60px;top:358.70px;line-height:12px;font-size:8.8px;color:#232323;transform-origin:0 50%;transform:scaleX(0.9254)">Menge</div>
<div class="a" style="left:628.90px;top:358.70px;line-height:12px;font-size:8.8px;color:#232323;transform-origin:0 50%;transform:scaleX(0.8507)">EH</div>
<div class="a" style="left:652.90px;top:358.70px;line-height:12px;font-size:8.8px;color:#232323;transform-origin:0 50%;transform:scaleX(0.9154)">Ihre Art.Nr.</div>
<div class="a" style="left:699.60px;top:358.70px;line-height:12px;font-size:8.8px;color:#232323;transform-origin:0 50%;transform:scaleX(0.9558)">B e z e i c h n u n g</div>
<div class="a" style="left:888.50px;top:358.70px;line-height:12px;font-size:8.8px;color:#232323;transform-origin:0 50%;transform:scaleX(0.9027)">Preis</div>
<div class="a" style="left:918.00px;top:358.70px;line-height:12px;font-size:8.8px;color:#232323;transform-origin:0 50%;transform:scaleX(0.9064)">Rabatt</div>
<div class="a" style="left:964.60px;top:358.70px;line-height:12px;font-size:8.8px;color:#232323;transform-origin:0 50%;transform:scaleX(0.9102)">Betrag</div>
<div class="a" style="left:606.70px;top:378.10px;line-height:12px;font-size:8.8px;color:#232323;transform-origin:0 50%;transform:scaleX(0.8933)">2,00</div>
<div class="a" style="left:700.50px;top:378.10px;line-height:12px;font-size:8.8px;color:#232323;transform-origin:0 50%;transform:scaleX(0.9121)">Art.Nr.: G1/1001</div>
<div class="a" style="left:892.00px;top:378.10px;line-height:12px;font-size:8.8px;color:#232323;transform-origin:0 50%;transform:scaleX(0.8524)">3,00</div>
<div class="a" style="left:973.20px;top:378.10px;line-height:12px;font-size:8.8px;color:#232323;transform-origin:0 50%;transform:scaleX(0.8758)">6,00</div>
<div class="a" style="left:606.70px;top:396.30px;line-height:12px;font-size:8.8px;color:#232323;transform-origin:0 50%;transform:scaleX(0.8933)">2,00</div>
<div class="a" style="left:700.50px;top:396.30px;line-height:12px;font-size:8.8px;color:#232323;transform-origin:0 50%;transform:scaleX(0.9121)">Art.Nr.: G1/1003</div>
<div class="a" style="left:892.00px;top:396.30px;line-height:12px;font-size:8.8px;color:#232323;transform-origin:0 50%;transform:scaleX(0.8524)">2,50</div>
<div class="a" style="left:973.20px;top:396.30px;line-height:12px;font-size:8.8px;color:#232323;transform-origin:0 50%;transform:scaleX(0.8758)">5,00</div>
<div class="a" style="left:700.50px;top:387.20px;line-height:12px;font-size:8.8px;color:#232323;transform-origin:0 50%;transform:scaleX(0.9205)">Artikel 01</div>
<div class="a" style="left:700.50px;top:405.30px;line-height:12px;font-size:8.8px;color:#232323;transform-origin:0 50%;transform:scaleX(0.9246)">Artikel 03 - Folge</div>
<div class="a" style="left:945.00px;top:418.00px;width:47.70px;height:0.90px;background:#555"></div>
<div class="a" style="left:804.70px;top:418.90px;line-height:12px;font-size:8.8px;color:#232323;transform-origin:0 50%;transform:scaleX(0.9090)">Nettobetrag</div>
<div class="a" style="left:970.00px;top:418.90px;line-height:12px;font-size:8.8px;color:#232323;transform-origin:0 50%;transform:scaleX(0.8517)">11,00</div>
<div class="a" style="left:804.70px;top:426.10px;line-height:12px;font-size:8.8px;color:#232323;transform-origin:0 50%;transform:scaleX(0.9213)">20% MWSt.</div>
<div class="a" style="left:973.20px;top:426.10px;line-height:12px;font-size:8.8px;color:#232323;transform-origin:0 50%;transform:scaleX(0.8758)">2,20</div>
<div class="a" style="left:945.00px;top:441.00px;width:47.70px;height:0.90px;background:#555"></div>
<div class="a" style="left:804.70px;top:442.50px;line-height:12px;font-size:8.8px;color:#111;font-weight:bold;transform-origin:0 50%;transform:scaleX(0.9202)">Gesamtbetrag EUR</div>
<div class="a" style="left:968.50px;top:442.50px;line-height:12px;font-size:8.8px;color:#111;font-weight:bold;transform-origin:0 50%;transform:scaleX(0.8946)">13,20</div>
<div class="a" style="left:945.00px;top:454.60px;width:47.70px;height:0.80px;background:#555"></div>
<div class="a" style="left:945.00px;top:457.00px;width:47.70px;height:0.80px;background:#555"></div>
<div class="a" style="left:590.80px;top:476.50px;line-height:12px;font-size:8.8px;color:#222;font-weight:bold;font-style:italic;transform-origin:0 50%;transform:scaleX(0.9745)">Zahlung:</div>
<div class="a" style="left:637.00px;top:476.50px;line-height:12px;font-size:8.8px;color:#232323;transform-origin:0 50%;transform:scaleX(0.9433)">Zahlbar innerhalb von 30 Tagen netto. 13,20 EUR</div>
<div class="a" style="left:590.80px;top:495.90px;line-height:12px;font-size:8.8px;color:#232323;transform-origin:0 50%;transform:scaleX(0.9539)">Hinweis für Telebanking: Bitte geben Sie als Zahlungsreferenz 250034100002 an.</div>
<div class="a" style="left:569.40px;top:550.00px;width:452.90px;height:73.40px;background:#4682ae"></div>
<div class="a" style="left:574.50px;top:558.80px;line-height:10px;font-size:7.4px;letter-spacing:0.158px;color:#f2f7fb">Summe:</div>
<div class="a" style="left:574.50px;top:573.00px;line-height:10px;font-size:7.4px;letter-spacing:0.210px;color:#f2f7fb">Netto:</div>
<div class="a" style="left:634.80px;top:573.00px;line-height:10px;font-size:7.4px;letter-spacing:0.286px;color:#f2f7fb">11,00</div>
<div class="a" style="left:574.50px;top:587.90px;line-height:10px;font-size:7.4px;letter-spacing:-0.042px;color:#f2f7fb">MWSt.:</div>
<div class="a" style="left:638.50px;top:587.90px;line-height:10px;font-size:7.4px;letter-spacing:0.324px;color:#f2f7fb">2,20</div>
<div class="a" style="left:574.50px;top:602.50px;line-height:12px;font-size:8.8px;color:#fff;font-weight:bold;transform-origin:0 50%;transform:scaleX(0.8867)">Brutto:</div>
<div class="a" style="left:632.50px;top:602.30px;line-height:11px;font-size:7.8px;letter-spacing:0.436px;color:#fff;font-weight:bold">13,20</div>
<div class="a" style="left:895.40px;top:561.50px;width:119.40px;height:23.00px;background:#fff;border:1px solid #25465f;box-shadow:0 0 1px #25465f"></div>
<div class="a" style="left:900.20px;top:567.40px;line-height:12px;font-size:8.9px;color:#1c1c1c">Speichern</div>
<div class="a" style="left:895.40px;top:590.20px;width:119.40px;height:23.20px;background:#fff;border:1px solid #25465f;box-shadow:0 0 1px #25465f"></div>
<div class="a" style="left:900.20px;top:596.20px;line-height:12px;font-size:8.9px;letter-spacing:0.006px;color:#1c1c1c">Speichern u. Drucken</div>
<svg class="a" style="left:995.80px;top:567.20px" width="12" height="12" viewBox="0 0 12 12"><rect x="0.6" y="0.6" width="10.8" height="10.8" rx="1" fill="#e6f0f8" stroke="#7fabd0" stroke-width="1"/><rect x="2.8" y="0.9" width="6" height="4" fill="#fff" stroke="#7fabd0" stroke-width="0.8"/><rect x="3.2" y="7" width="5.5" height="4.2" fill="#fff" stroke="#7fabd0" stroke-width="0.8"/></svg>
<svg class="a" style="left:995.80px;top:596.50px" width="12" height="11" viewBox="0 0 12 11"><rect x="2.8" y="0.5" width="6.4" height="3.2" fill="#fff" stroke="#3d7fb8" stroke-width="0.9"/><rect x="0.5" y="3.2" width="11" height="5" rx="1.2" fill="#3d7fb8"/><rect x="2.8" y="6.6" width="6.4" height="3.8" fill="#fff" stroke="#3d7fb8" stroke-width="0.9"/></svg>
<div class="a" style="left:2.00px;top:623.40px;width:1019.00px;height:20.20px;background:#ffffc4;border-bottom:1px solid #8c8c8c"></div>
<div class="a" style="left:2.00px;top:622.60px;width:567.40px;height:1.00px;background:#8c8c8c"></div>
<div class="a" style="left:7.00px;top:623.50px;line-height:10px;font-size:6.9px;letter-spacing:-0.113px;color:#1a1a1a">Hier geben Sie bitte die Menge ein. F5 = Menge berechnen, F8 = Artikelaufruf mit EAN-Code (Scanner)</div>
<div class="a" style="left:2.00px;top:643.60px;width:1022.00px;height:15.40px;background:#f0f0f0"></div>
<svg class="a" style="left:4.00px;top:650.00px" width="8" height="6" viewBox="0 0 8 6"><path d="M0.5 5.5c0-2 1-2.8 2-2.8s1.5 0.6 1.5 0.6 0.5-0.6 1.5-0.6 2 0.8 2 2.8" fill="none" stroke="#c4c4c4" stroke-width="0.9"/><circle cx="2.6" cy="1.4" r="1" fill="#c4c4c4"/><circle cx="5.6" cy="1.4" r="1" fill="#c4c4c4"/></svg>
<div class="a" style="left:12.50px;top:647.80px;line-height:11px;font-size:7.6px;letter-spacing:0.067px;color:#bdbdbd">Benutzer: 009 Verkäufer</div>
<div class="a" style="left:107.00px;top:647.80px;line-height:11px;font-size:7.6px;letter-spacing:-0.027px;color:#333">Datenbank:</div>
<svg class="a" style="left:150.00px;top:648.40px" width="10" height="10" viewBox="0 0 10 10"><circle cx="5" cy="5" r="2.9" fill="none" stroke="#a6a6a6" stroke-width="1.9"/><circle cx="5" cy="5" r="4.2" fill="none" stroke="#a6a6a6" stroke-width="1.2" stroke-dasharray="1.65 1.65"/></svg>
<div class="a" style="left:161.00px;top:647.80px;line-height:11px;font-size:7.6px;letter-spacing:0.090px;color:#bdbdbd">SQL-Server: \sql2019, Datenbank: Musterfirma_GmbH</div>
<div class="a" style="left:830.50px;top:647.80px;line-height:11px;font-size:7.6px;letter-spacing:0.110px;color:#333">Tagesdatum</div>
<svg class="a" style="left:877.00px;top:648.50px" width="10" height="10" viewBox="0 0 10 10"><rect x="0.5" y="1.5" width="9" height="8" fill="#eee" stroke="#999" stroke-width="0.9"/><path d="M0.5 3.6h9M3 0.3v2M7 0.3v2" stroke="#999" stroke-width="0.9"/><rect x="2.5" y="5" width="5" height="3" fill="#bbb"/></svg>
<div class="a" style="left:890.50px;top:647.80px;line-height:11px;font-size:7.6px;letter-spacing:-0.011px;color:#bdbdbd">Dienstag, 29.04.2025, Kal.Jahr 2025</div>
<div class="a" style="left:1022.30px;top:0.00px;width:1.70px;height:662.00px;background:#dbdbdb"></div>
<div class="a" style="left:0.00px;top:0.00px;width:1024.00px;height:0.80px;background:#c4c4c4"></div>
<div class="a" style="left:0.00px;top:0.80px;width:1024.00px;height:1.10px;background:#505050"></div>
<div class="a" style="left:0.00px;top:0.00px;width:1.00px;height:662.00px;background:#cfcfcf"></div>
<div class="a" style="left:1.00px;top:0.80px;width:1.10px;height:659.20px;background:#626262"></div>
<div class="a" style="left:0.00px;top:658.80px;width:1024.00px;height:1.60px;background:#4a4a4a"></div>
<div class="a" style="left:0.00px;top:660.40px;width:1024.00px;height:1.60px;background:#dedede"></div>
</body></html>
